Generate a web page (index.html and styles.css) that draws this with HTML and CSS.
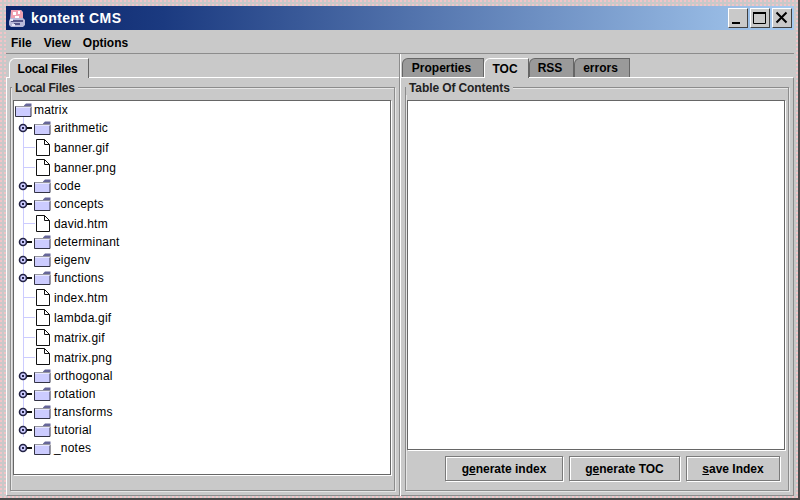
FILE: index.html
```html
<!DOCTYPE html>
<html lang="en">
<head>
<meta charset="utf-8">
<title>kontent CMS</title>
<link rel="stylesheet" href="styles.css">
</head>
<body>
<svg class="defs" width="0" height="0" aria-hidden="true">
  <symbol id="folder" viewBox="0 0 17 14">
    <path d="M.5 3.5h15.500v10H.5z" fill="#ccccff" stroke="#333344"/>
    <path d="M9 3V2.500L11 .5h5.500V3z" fill="#666699"/>
    <path d="M1 4h15" stroke="#ffffff"/>
  </symbol>
  <symbol id="file" viewBox="0 0 14 17">
    <path d="M.5.5h8l5 5v11H.5z" fill="#ffffff" stroke="#111111"/>
    <path d="M8.500.5v5h5" fill="none" stroke="#111111"/>
  </symbol>
  <symbol id="handle" viewBox="0 0 14 10">
    <circle cx="5" cy="5" r="3.500" fill="#ccccff" stroke="#222244" stroke-width="1.600"/>
    <rect x="4" y="4" width="2" height="2" fill="#222244"/>
    <path d="M9 5h5" stroke="#111111" stroke-width="2"/>
  </symbol>
</svg>
<div class="window">
  <header class="titlebar">
    <svg class="appicon" viewBox="0 0 18 18" width="18" height="18" aria-hidden="true">
      <path d="M3 1h10l2 2v6l2 2v5l-2 2H3l-2-2v-4l1-2z" fill="#b8b8d8"/>
      <path d="M3 1h10l2 3v5H3z" fill="#f0a0b0"/>
      <path d="M5 3h3v3H5zM10 2h2v3h-2zM7 7h4v2H7z" fill="#ffffff"/>
      <path d="M3 11h12v2H3zM6 14h6v2H6z" fill="#555588"/>
      <path d="M2 10h3v2H2zM4 15h3v2H4z" fill="#e8e8f8"/>
    </svg>
    <span class="title">kontent CMS</span>
    <div class="winbtns">
      <button class="winbtn" aria-label="Minimize"><svg viewBox="0 0 18 18" width="18" height="18"><rect x="3" y="13" width="8" height="2" fill="#000"/></svg></button>
      <button class="winbtn" aria-label="Maximize"><svg viewBox="0 0 18 18" width="18" height="18"><path d="M2.500 3.500h12v11h-12z" fill="none" stroke="#000"/><path d="M2 4h13" stroke="#000" stroke-width="2"/></svg></button>
      <button class="winbtn" aria-label="Close"><svg viewBox="0 0 18 18" width="18" height="18"><path d="M3.500 3.500l10 10M13.500 3.500l-10 10" stroke="#000" stroke-width="2" fill="none"/></svg></button>
    </div>
  </header>
  <nav class="menubar">
    <span class="menu">File</span>
    <span class="menu">View</span>
    <span class="menu">Options</span>
  </nav>
  <div class="split">
    <section class="pane pane-left">
      <div class="tabs">
        <span class="tab active tab-local">Local Files</span>
      </div>
      <div class="tabpanel">
        <div class="group">
          <span class="legend">Local Files</span>
          <div class="view tree">
            <div class="row root"><svg class="ic-folder"><use href="#folder"/></svg><span>matrix</span></div>
            <div class="children">
              <div class="row fold"><svg class="ic-handle"><use href="#handle"/></svg><svg class="ic-folder"><use href="#folder"/></svg><span>arithmetic</span></div>
              <div class="row leaf"><svg class="ic-file"><use href="#file"/></svg><span>banner.gif</span></div>
              <div class="row leaf"><svg class="ic-file"><use href="#file"/></svg><span>banner.png</span></div>
              <div class="row fold"><svg class="ic-handle"><use href="#handle"/></svg><svg class="ic-folder"><use href="#folder"/></svg><span>code</span></div>
              <div class="row fold"><svg class="ic-handle"><use href="#handle"/></svg><svg class="ic-folder"><use href="#folder"/></svg><span>concepts</span></div>
              <div class="row leaf"><svg class="ic-file"><use href="#file"/></svg><span>david.htm</span></div>
              <div class="row fold"><svg class="ic-handle"><use href="#handle"/></svg><svg class="ic-folder"><use href="#folder"/></svg><span>determinant</span></div>
              <div class="row fold"><svg class="ic-handle"><use href="#handle"/></svg><svg class="ic-folder"><use href="#folder"/></svg><span>eigenv</span></div>
              <div class="row fold"><svg class="ic-handle"><use href="#handle"/></svg><svg class="ic-folder"><use href="#folder"/></svg><span>functions</span></div>
              <div class="row leaf"><svg class="ic-file"><use href="#file"/></svg><span>index.htm</span></div>
              <div class="row leaf"><svg class="ic-file"><use href="#file"/></svg><span>lambda.gif</span></div>
              <div class="row leaf"><svg class="ic-file"><use href="#file"/></svg><span>matrix.gif</span></div>
              <div class="row leaf short"><svg class="ic-file"><use href="#file"/></svg><span>matrix.png</span></div>
              <div class="row fold"><svg class="ic-handle"><use href="#handle"/></svg><svg class="ic-folder"><use href="#folder"/></svg><span>orthogonal</span></div>
              <div class="row fold"><svg class="ic-handle"><use href="#handle"/></svg><svg class="ic-folder"><use href="#folder"/></svg><span>rotation</span></div>
              <div class="row fold"><svg class="ic-handle"><use href="#handle"/></svg><svg class="ic-folder"><use href="#folder"/></svg><span>transforms</span></div>
              <div class="row fold"><svg class="ic-handle"><use href="#handle"/></svg><svg class="ic-folder"><use href="#folder"/></svg><span>tutorial</span></div>
              <div class="row fold last"><svg class="ic-handle"><use href="#handle"/></svg><svg class="ic-folder"><use href="#folder"/></svg><span>_notes</span></div>
            </div>
          </div>
        </div>
      </div>
    </section>
    <section class="pane pane-right">
      <div class="tabs tabs-right">
        <span class="tab tab-props">Properties</span>
        <span class="tab active tab-toc">TOC</span>
        <span class="tab tab-rss">RSS</span>
        <span class="tab tab-errors">errors</span>
      </div>
      <div class="tabpanel">
        <div class="group">
          <span class="legend">Table Of Contents</span>
          <div class="view"></div>
          <div class="actions">
            <button class="btn btn-index"><span>g<u>e</u>nerate index</span></button>
            <button class="btn btn-toc"><span>g<u>e</u>nerate TOC</span></button>
            <button class="btn btn-save"><span><u>s</u>ave Index</span></button>
          </div>
        </div>
      </div>
    </section>
  </div>
</div>
</body>
</html>
```

FILE: styles.css
```css
* { box-sizing: border-box; }
html, body { margin: 0; padding: 0; }
body {
  width: 800px;
  height: 500px;
  overflow: hidden;
  background-color: #c9c9c9;
  font: bold 12px "Liberation Sans", Arial, sans-serif;
  color: #000;
}
.defs { display: block; height: 0; }
.window {
  width: 800px;
  height: 500px;
  padding: 6px 4px 2px 6px;
  display: flex;
  flex-direction: column;
  background-color: #c9c9c9;
  background-image:
    radial-gradient(circle at 1px 1px, #f2c4c8 0.9px, transparent 1px);
  background-size: 4px 4px;
  border-bottom: 2px solid #4a4a4a;
  border-right: 2px solid #4a4a4a;
}
.titlebar {
  height: 24px;
  flex: none;
  display: flex;
  align-items: center;
  padding-left: 2px;
  background: linear-gradient(90deg, #0a246a 0%, #1b3a80 20%, #a6caf0 100%);
  color: #fff;
}
.appicon { flex: none; }
.title {
  margin-left: 5px;
  font: bold 14px "Liberation Sans", Arial, sans-serif;
  letter-spacing: 0.45px;
}
.winbtns {
  margin-left: auto;
  margin-right: 2px;
  display: flex;
  gap: 2px;
}
.winbtn {
  width: 20px;
  height: 20px;
  margin: 0;
  padding: 0;
  display: flex;
  align-items: center;
  justify-content: center;
  background: #c9c9c9;
  border: 1px solid;
  border-color: #ffffff #404040 #404040 #ffffff;
}
.menubar {
  height: 24px;
  flex: none;
  display: flex;
  align-items: center;
  background-color: #c9c9c9;
  border-bottom: 1px solid #8c8c8c;
  padding: 2px 0 0 5px;
  gap: 12px;
}
.split {
  flex: 1;
  min-height: 0;
  display: flex;
  background-color: #c9c9c9;
}
.pane {
  display: flex;
  flex-direction: column;
  padding-top: 4px;
}
.pane-left { width: 394px; }
.pane-right {
  width: 394px;
  border-left: 1px solid #fff;
  box-shadow: -1px 0 0 #8c8c8c;
}
.tabs {
  height: 19px;
  flex: none;
  display: flex;
  align-items: flex-end;
  padding-left: 3px;
  position: relative;
}
.tab {
  height: 19px;
  display: flex;
  align-items: center;
  justify-content: center;
  padding-right: 3px;
  background: #9a9a9a;
  border: 1px solid #666;
  border-bottom: 0;
  border-top-left-radius: 6px;
}
.tab.active {
  background: #c9c9c9;
  border-color: #fff #666 transparent #fff;
  height: 20px;
  margin-bottom: -1px;
  z-index: 1;
  position: relative;
}
.tab-local { width: 80px; letter-spacing: -0.2px; }
.tabs-right { padding-left: 1px; }
.tab-props { width: 82px; }
.tab-toc { width: 45px; }
.tab-rss { width: 45px; }
.tab-errors { width: 56px; }
.tabpanel {
  flex: 1;
  min-height: 0;
  padding: 9px 4px 4px 3px;
  border-top: 1px solid #fff;
  border-left: 1px solid #fff;
  border-right: 1px solid #8c8c8c;
  border-bottom: 1px solid #8c8c8c;
  display: flex;
}
.pane-right .tabpanel { border-left: 0; padding-left: 4px; }
.group {
  flex: 1;
  min-width: 0;
  position: relative;
  border: 1px solid #8c8c8c;
  box-shadow: 1px 1px 0 #e6e6e6, inset 1px 1px 0 #e6e6e6;
  padding: 12px 3px 0 2px;
  display: flex;
  flex-direction: column;
}
.legend {
  position: absolute;
  left: 1px;
  top: -7px;
  height: 14px;
  line-height: 14px;
  padding: 0 3px;
  background: #c9c9c9;
  color: #222;
  letter-spacing: -0.2px;
}
.pane-right .legend { left: 0; letter-spacing: -0.1px; }
.view {
  flex: 1;
  min-height: 0;
  background: #fff;
  border: 1px solid #666;
  box-shadow: 1px 1px 0 #fff;
}
.pane-left .group { padding-bottom: 15px; }
.pane-right .group { padding-left: 1px; }
.tree {
  font: 12px "Liberation Sans", Arial, sans-serif;
  letter-spacing: 0.2px;
  padding-top: 0;
}
.row {
  display: flex;
  align-items: center;
  position: relative;
}
.root { height: 18px; padding-left: 1px; }
.root span { margin-left: 2px; }
.children { position: relative; }
.children::before {
  content: "";
  position: absolute;
  left: 9px;
  top: -2px;
  bottom: 20px;
  width: 1px;
  background: #ccccff;
}
.fold { height: 18px; padding-left: 20px; }
.leaf { height: 20px; padding-left: 22px; }
.leaf.short { height: 19px; margin-bottom: 1px; }
.leaf::before {
  content: "";
  position: absolute;
  left: 9px;
  top: 10px;
  width: 12px;
  height: 1px;
  background: #ccccff;
}
.ic-folder { width: 17px; height: 14px; flex: none; }
.ic-file { width: 14px; height: 17px; flex: none; }
.ic-handle {
  position: absolute;
  left: 4px;
  top: 4px;
  width: 14px;
  height: 10px;
  z-index: 1;
}
.fold span { margin-left: 3px; }
.leaf span { margin-left: 4px; padding-top: 2px; }
.actions {
  flex: none;
  height: 40px;
  display: flex;
  justify-content: flex-end;
  align-items: flex-start;
  gap: 6px;
  padding: 6px 5px 0 0;
}
.btn {
  height: 25px;
  margin: 0;
  padding: 0;
  background: #c9c9c9;
  font: bold 12px "Liberation Sans", Arial, sans-serif;
  color: #000;
  border: 1px solid #7a7a7a;
  box-shadow: 1px 1px 0 #fff, inset 1px 1px 0 #fff;
}
.btn-index { width: 118px; }
.btn-toc { width: 111px; }
.btn-save { width: 94px; }
```
